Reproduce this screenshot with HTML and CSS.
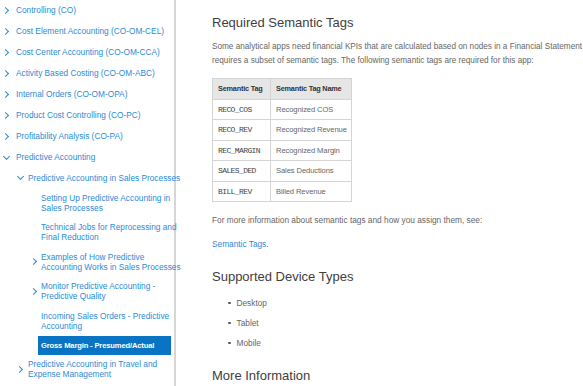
FILE: index.html
```html
<!DOCTYPE html>
<html>
<head>
<meta charset="utf-8">
<link rel="stylesheet" href="styles.css">
</head>
<body>
<div class="page">
  <nav class="sidebar">
    <ul class="lvl1">
      <li class="item"><span class="chev right"></span><a>Controlling (CO)</a></li>
      <li class="item"><span class="chev right"></span><a>Cost Element Accounting (CO-OM-CEL)</a></li>
      <li class="item"><span class="chev right"></span><a>Cost Center Accounting (CO-OM-CCA)</a></li>
      <li class="item"><span class="chev right"></span><a>Activity Based Costing (CO-OM-ABC)</a></li>
      <li class="item"><span class="chev right"></span><a>Internal Orders (CO-OM-OPA)</a></li>
      <li class="item"><span class="chev right"></span><a>Product Cost Controlling (CO-PC)</a></li>
      <li class="item"><span class="chev right"></span><a>Profitability Analysis (CO-PA)</a></li>
      <li>
        <div class="item"><span class="chev down"></span><a>Predictive Accounting</a></div>
        <ul class="lvl2">
          <li>
            <div class="item2 single"><span class="chev down"></span><a>Predictive Accounting in Sales Processes</a></div>
            <ul class="lvl3">
              <li class="item3"><span class="chev none"></span><a>Setting Up Predictive Accounting in<br>Sales Processes</a></li>
              <li class="item3"><span class="chev none"></span><a>Technical Jobs for Reprocessing and<br>Final Reduction</a></li>
              <li class="item3"><span class="chev right"></span><a>Examples of How Predictive<br>Accounting Works in Sales Processes</a></li>
              <li class="item3"><span class="chev right"></span><a>Monitor Predictive Accounting -<br>Predictive Quality</a></li>
              <li class="item3"><span class="chev none"></span><a>Incoming Sales Orders - Predictive<br>Accounting</a></li>
              <li class="item3 active"><span class="chev none"></span><a>Gross Margin - Presumed/Actual</a></li>
            </ul>
          </li>
          <li class="item2 multi"><span class="chev right"></span><a>Predictive Accounting in Travel and<br>Expense Management</a></li>
        </ul>
      </li>
    </ul>
  </nav>
  <main class="content">
    <h2>Required Semantic Tags</h2>
    <p class="intro">Some analytical apps need financial KPIs that are calculated based on nodes in a Financial Statement Version. This app<br>requires a subset of semantic tags. The following semantic tags are required for this app:</p>
    <table class="tags">
      <colgroup><col class="c1"><col class="c2"></colgroup>
      <thead>
        <tr><th>Semantic Tag</th><th>Semantic Tag Name</th></tr>
      </thead>
      <tbody>
        <tr><td class="mono">RECO_COS</td><td>Recognized COS</td></tr>
        <tr><td class="mono">RECO_REV</td><td>Recognized Revenue</td></tr>
        <tr><td class="mono">REC_MARGIN</td><td>Recognized Margin</td></tr>
        <tr><td class="mono">SALES_DED</td><td>Sales Deductions</td></tr>
        <tr><td class="mono">BILL_REV</td><td>Billed Revenue</td></tr>
      </tbody>
    </table>
    <p class="text">For more information about semantic tags and how you assign them, see:</p>
    <p class="text"><a class="link">Semantic Tags</a>.</p>
    <h2 class="h2b">Supported Device Types</h2>
    <ul class="devices">
      <li>Desktop</li>
      <li>Tablet</li>
      <li>Mobile</li>
    </ul>
    <h2 class="h2c">More Information</h2>
  </main>
</div>
</body>
</html>
```
FILE: styles.css
```css
* { box-sizing: border-box; }
html, body { margin: 0; padding: 0; background: #fff; }
body {
  font-family: "Liberation Sans", Arial, sans-serif;
  font-size: 8.3px;
  color: #666;
  overflow: hidden;
  width: 583px;
  height: 386px;
}
ul { list-style: none; margin: 0; padding: 0; }
a { color: #2b8bd6; text-decoration: none; }

.page { display: flex; height: 386px; }

.sidebar {
  width: 176px;
  flex: none;
  border-right: 2px solid #d6d6d6;
  padding-right: 3px;
  white-space: nowrap;
}

.item {
  display: flex;
  align-items: center;
  height: 21px;
  line-height: 11px;
}
.item .chev { width: 16px; }

.item2 {
  display: flex;
  align-items: center;
  padding-left: 14px;
  line-height: 10px;
}
.item2 .chev { width: 14px; }
.item2.single { height: 20px; }
.item2.multi { height: 29.5px; }

.item3 {
  display: flex;
  align-items: center;
  height: 29.5px;
  line-height: 10px;
  padding-left: 28px;
}
.item3 .chev { width: 10px; }
.item3 a { padding: 0 3px; }
.item3.active { height: 19px; }
.item3.active a {
  background: #0a74c4;
  color: #fff;
  font-weight: bold;
  font-size: 7.6px;
  letter-spacing: -0.15px;
  line-height: 19px;
  flex: 1;
}

.chev {
  flex: none;
  display: flex;
  align-items: center;
  padding-left: 4px;
  height: 10px;
}
.chev.right::before {
  content: "";
  width: 4px;
  height: 4px;
  border-right: 1.5px solid #2b8bd6;
  border-top: 1.5px solid #2b8bd6;
  transform: rotate(45deg);
  margin-left: -1px;
}
.chev.down::before {
  content: "";
  width: 4px;
  height: 4px;
  border-right: 1.5px solid #2b8bd6;
  border-bottom: 1.5px solid #2b8bd6;
  transform: rotate(45deg);
  margin-top: -3px;
}

.content {
  flex: 1;
  padding-left: 36px;
  white-space: nowrap;
  overflow: hidden;
}
h2 {
  font-family: "Liberation Sans", Arial, sans-serif;
  font-weight: normal;
  font-size: 13px;
  color: #404040;
  margin: 14px 0 0 0;
  line-height: 17px;
}
.intro {
  font-size: 8.2px;
  line-height: 14px;
  margin: 9px 0 0 0;
}
.tags {
  border-collapse: collapse;
  margin-top: 10px;
  table-layout: fixed;
  width: 139px;
}
.tags .c1 { width: 58px; }
.tags .c2 { width: 81px; }
.tags th, .tags td {
  border: 1px solid #d4d4d4;
  height: 20.5px;
  padding: 0 0 0 5px;
  text-align: left;
  font-size: 7.6px;
  letter-spacing: -0.1px;
  overflow: hidden;
}
.tags th {
  background: #e6e6e6;
  color: #333;
  font-weight: bold;
  font-size: 7.3px;
  letter-spacing: -0.2px;
}
.tags td.mono {
  font-family: "Liberation Mono", monospace;
  font-size: 8px;
  letter-spacing: -0.6px;
  color: #444;
}
.text { margin: 12px 0 0 0; line-height: 12px; }
.link { color: #2b8bd6; }
.h2b { margin-top: 18px; }
.devices { margin-top: 8px; padding-left: 16px; }
.devices li {
  height: 20px;
  line-height: 20px;
  display: flex;
  align-items: center;
}
.devices li::before {
  content: "";
  width: 2.5px;
  height: 2.5px;
  background: #555;
  border-radius: 50%;
  margin-right: 6px;
}
.h2c { margin-top: 14px; }
```
